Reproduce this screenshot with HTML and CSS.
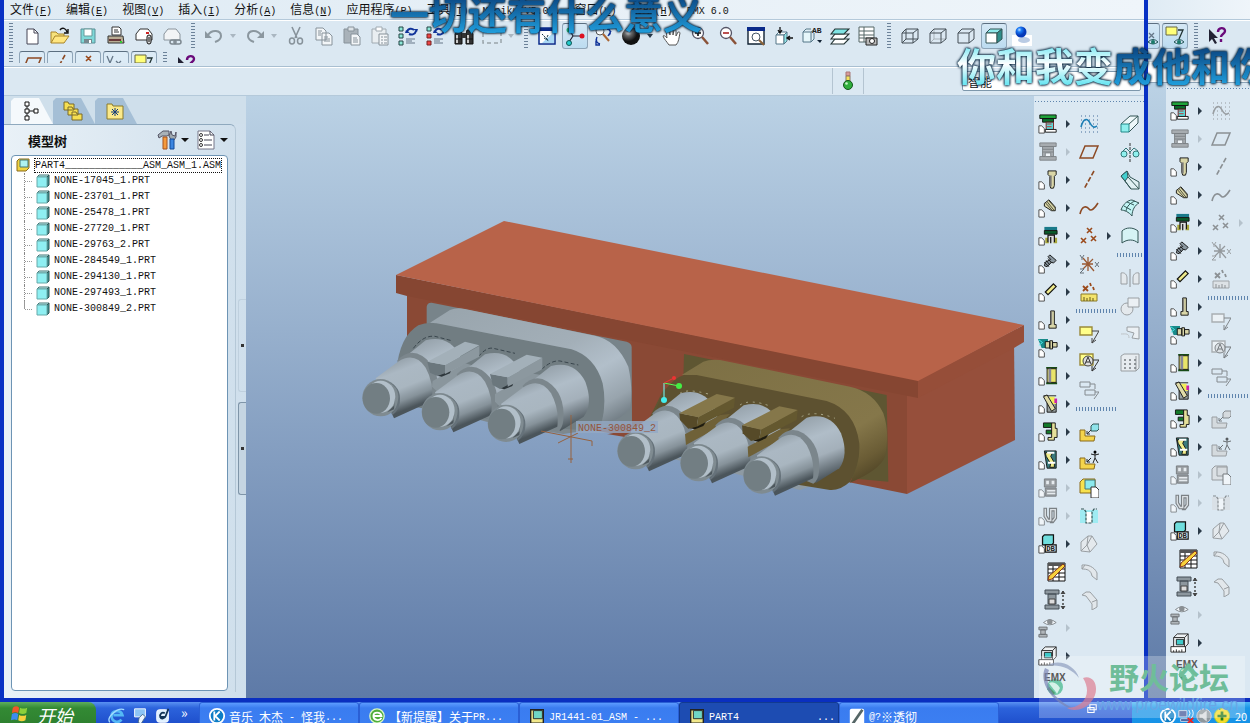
FILE: index.html
```html
<!DOCTYPE html>
<html lang="zh-CN">
<head>
    <meta charset="UTF-8">
    <meta name="viewport" content="width=device-width, initial-scale=1.0">
    <title>PART4</title>
    <link rel="stylesheet" href="styles.css">
</head>
<body>
    <!-- Icon sprite -->
    <svg class="sprite" aria-hidden="true">
        <symbol id="new" viewBox="0 0 20 20"><path d="M5 3h7l4 4v11H5z" fill="#fff" stroke="#445"/><path d="M12 3v4h4" fill="none" stroke="#445"/></symbol>
        <symbol id="open" viewBox="0 0 20 20"><path d="M1 17V6h5l2 2h6v3" fill="#f6e27c" stroke="#a8842a"/><path d="M1 17l4-7h14l-5 7z" fill="#ffe680" stroke="#a8842a"/><path d="M10 4c2-3 6-2 7 2M18 3v4h-4" fill="none" stroke="#111" stroke-width="1.4"/></symbol>
        <symbol id="save" viewBox="0 0 20 20"><path d="M3 3h14v14H3z" fill="#7fd8d8" stroke="#5a8f96"/><path d="M6 3h8v7H6z" fill="#fff" stroke="#699"/><path d="M6 13h8v4H6z" fill="#78898f"/><path d="M11 14h2v3h-2z" fill="#fff"/></symbol>
        <symbol id="print" viewBox="0 0 20 20"><path d="M6 9V1h7l2 2v6z" fill="#fff" stroke="#333"/><path d="M8 4h4M8 6h5" stroke="#333"/><path d="M2 10h15l1 7H2z" fill="#b9ad94" stroke="#333"/><path d="M3 14h12" stroke="#6a3a3a" stroke-width="2"/><path d="M14 16h2" stroke="#3c3" stroke-width="2"/></symbol>
        <symbol id="mail" viewBox="0 0 20 20"><path d="M2 8l4-5h8l4 5v6H2z" fill="#fff" stroke="#333"/><path d="M12 7h3" stroke="#c22" stroke-width="2"/><rect x="13" y="9" width="4" height="9" rx="2" fill="#ddd" stroke="#111"/><path d="M15 11v5" stroke="#111"/></symbol>
        <symbol id="maillink" viewBox="0 0 20 20"><path d="M2 8l4-5h8l4 5v6H2z" fill="#f2f4f6" stroke="#8a949c"/><rect x="8" y="14" width="6" height="4" rx="2" fill="none" stroke="#7d8890" stroke-width="1.5"/><rect x="12" y="14" width="7" height="4" rx="2" fill="none" stroke="#7d8890" stroke-width="1.5"/></symbol>
        <symbol id="undo" viewBox="0 0 20 20"><path d="M4 9c4-6 13-5 13 1 0 3-3 5-6 6" fill="none" stroke="#8b979f" stroke-width="2"/><path d="M1 5v7h7z" fill="#8b979f"/></symbol>
        <symbol id="redo" viewBox="0 0 20 20"><path d="M16 9c-4-6-13-5-13 1 0 3 3 5 6 6" fill="none" stroke="#8b979f" stroke-width="2"/><path d="M19 5v7h-7z" fill="#8b979f"/></symbol>
        <symbol id="cut" viewBox="0 0 20 20"><path d="M6 1l5 11M14 1L9 12" stroke="#87929a" stroke-width="1.6"/><ellipse cx="6" cy="15" rx="2.5" ry="3" fill="none" stroke="#87929a" stroke-width="1.5"/><ellipse cx="14" cy="15" rx="2.5" ry="3" fill="none" stroke="#87929a" stroke-width="1.5"/></symbol>
        <symbol id="copy" viewBox="0 0 20 20"><g fill="#f3f6f8" stroke="#87929a"><path d="M2 2h7l3 3v9H2zM8 7h7l3 3v9H8z"/><path d="M4 5h4M4 7h3M4 9h3M10 11h4M10 13h6M10 15h6"/></g></symbol>
        <symbol id="paste" viewBox="0 0 20 20"><path d="M2 3h14v14H2z" fill="#a9b2b9" stroke="#87929a"/><path d="M6 1h6v4H6z" fill="#dde3e7" stroke="#87929a"/><path d="M9 8h6l3 3v8H9z" fill="#f3f6f8" stroke="#87929a"/><path d="M11 12h4M11 14h5M11 16h5" stroke="#87929a"/></symbol>
        <symbol id="pastespecial" viewBox="0 0 20 20"><path d="M2 3h14v14H2z" fill="#e9eef1" stroke="#a0aab1"/><path d="M6 1h6v4H6z" fill="#fff" stroke="#a0aab1"/><path d="M9 8h9v11H9z" fill="#f3f6f8" stroke="#87929a"/><path d="M11 11h2M11 14h2M11 17h2M14 11h3M14 14h3M14 17h3" stroke="#87929a"/></symbol>
        <symbol id="regen" viewBox="0 0 20 20"><g fill="#8ee8d8" stroke="#244"><path d="M1 1h4v4H1zM1 8h4v4H1zM1 15h4v4H1z"/></g><path d="M9 6c1-4 5-4 7-2M18 5c-1 4-5 4-7 3" fill="none" stroke="#139" stroke-width="2"/><path d="M8 4l4 3H7zM19 6l-4-3h5z" fill="#139"/><path d="M8 13h9M8 15h6M8 17h9" stroke="#678"/></symbol>
        <symbol id="regenman" viewBox="0 0 20 20"><path d="M1 1h4v4H1z" fill="#8ee8d8" stroke="#244"/><path d="M1 8h4v4H1zM1 15h4v4H1z" fill="#e44" stroke="#722"/><path d="M9 6c1-4 5-4 7-2M18 5c-1 4-5 4-7 3" fill="none" stroke="#139" stroke-width="2"/><path d="M8 4l4 3H7z" fill="#139"/><path d="M8 13h9M8 15h6M8 17h9" stroke="#678"/></symbol>
        <symbol id="find" viewBox="0 0 20 20"><path d="M1 18V8l2-4h4l1 4v10zM12 18V8l1-4h4l2 4v10z" fill="#333" stroke="#111"/><path d="M8 7h4v5H8z" fill="#333"/><path d="M3 9v8M14 9v8" stroke="#ccc" stroke-width="2"/><path d="M1 13h7M12 13h7" stroke="#111"/></symbol>
        <symbol id="selbox" viewBox="0 0 20 20"><path d="M1 3h18v14H1z" fill="none" stroke="#9aa4ab" stroke-width="1.5" stroke-dasharray="4 3"/></symbol>
        <symbol id="repaint" viewBox="0 0 20 20"><path d="M2 2h16v16H2z" fill="#fff" stroke="#0a2a8a" stroke-width="1.5"/><path d="M2 2h16v3H2z" fill="#0a2a8a"/><path d="M17 6v11H5z" fill="#a9d8f5"/><path d="M5 8l6 6M7 12l5 3M11 9l-2 5" stroke="#134" stroke-dasharray="2 1"/></symbol>
        <symbol id="spin" viewBox="0 0 20 20"><path d="M4 3l4 7h9M8 10l-4 6" fill="none" stroke="#223" stroke-width="1.2"/><circle cx="4" cy="4" r="2.5" fill="#2b7"/><circle cx="17" cy="10" r="2.5" fill="#d12"/><circle cx="4" cy="17" r="2.5" fill="#2cc" stroke="#155"/></symbol>
        <symbol id="orient" viewBox="0 0 20 20"><circle cx="7" cy="5" r="4" fill="#fff" stroke="#555"/><path d="M10 8l6 7" stroke="#a63" stroke-width="2"/><path d="M4 11c-2 4 0 6 3 7M14 3c4 0 4 5 2 6M3 15v4h4M18 5l-3 5" fill="none" stroke="#139" stroke-width="1.4"/></symbol>
        <symbol id="sphere" viewBox="0 0 20 20"><circle cx="10" cy="10" r="9" fill="url(#ballDark)"/></symbol>
        <symbol id="hand" viewBox="0 0 20 20"><path d="M7 19c-2-3-5-6-6-9 1-1 2 0 4 2L4 4c1-1 2-1 3 0l1 5V3c1-1 2-1 3 0v6l1-5c1-1 2 0 2 1v5l2-4c1 0 2 0 2 1-1 4-1 9-4 12z" fill="#fff" stroke="#555"/></symbol>
        <symbol id="zoomin" viewBox="0 0 20 20"><circle cx="8" cy="7" r="5.5" fill="#fff" stroke="#556" stroke-width="1.3"/><path d="M8 4v6M5 7h6" stroke="#111" stroke-width="1.6"/><path d="M12 11l6 7" stroke="#8a5238" stroke-width="2.5"/></symbol>
        <symbol id="zoomout" viewBox="0 0 20 20"><circle cx="8" cy="7" r="5.5" fill="#fff" stroke="#556" stroke-width="1.3"/><path d="M5 7h6" stroke="#a22" stroke-width="1.6"/><path d="M12 11l6 7" stroke="#8a5238" stroke-width="2.5"/></symbol>
        <symbol id="refit" viewBox="0 0 20 20"><path d="M2 2h16v16H2z" fill="#fff" stroke="#123" stroke-width="1.4"/><path d="M1 1h18v4H1z" fill="#0a2a8a"/><circle cx="10" cy="11" r="4" fill="#fff" stroke="#456"/><path d="M13 14l5 5" stroke="#8a6238" stroke-width="2"/></symbol>
        <symbol id="reorient" viewBox="0 0 20 20"><path d="M2 9l3-3h8l-3 3z" fill="#fff" stroke="#578"/><path d="M2 9h8v9H2z" fill="#fff" stroke="#578"/><path d="M10 9l3-3v9l-3 3z" fill="#8fe5e5" stroke="#578"/><path d="M6 1v6M4 4l2 3 2-3M19 12h-6M16 10l-3 2 3 2" fill="none" stroke="#111" stroke-width="1.3"/></symbol>
        <symbol id="views" viewBox="0 0 20 20"><path d="M1 6l3-3h5M1 6h8v10H1zM9 6l3-2M12 7v6l-3 3" fill="#e6f6fa" stroke="#578"/><path d="M15 14h5l-2 3z" fill="#123"/><text x="10" y="7" class="glyph">AB</text></symbol>
        <symbol id="layers" viewBox="0 0 20 20"><g stroke="#233" stroke-width="1.2"><path d="M1 18l4-5h14l-5 5z" fill="#fff"/><path d="M1 13l4-5h14l-5 5z" fill="#fff"/><path d="M1 8l4-5h14l-5 5z" fill="#7fe3e3"/></g></symbol>
        <symbol id="viewmgr" viewBox="0 0 20 20"><path d="M1 1h15v15H1z" fill="#fff" stroke="#566"/><path d="M1 5h15M1 9h15M1 12h15M6 1v15" stroke="#566"/><path d="M8 12h11v7H8z" fill="#b9b9b9" stroke="#222"/><circle cx="14" cy="15" r="2.5" fill="#fff" stroke="#222"/></symbol>
        <symbol id="wire" viewBox="0 0 20 20"><path d="M2 7h11v10H2zM6 3h12v10H6zM2 7l4-4M13 7l5-4M13 17l5-4M2 17l4-4" fill="none" stroke="#444f57"/></symbol>
        <symbol id="hiddenline" viewBox="0 0 20 20"><path d="M6 3v10h12M2 17l4-4" fill="none" stroke="#a9b3ba"/><path d="M2 7h11v10H2zM2 7l4-4h12v10l-5 4M13 7l5-4" fill="none" stroke="#444f57"/></symbol>
        <symbol id="nohidden" viewBox="0 0 20 20"><path d="M2 7h11v10H2zM2 7l4-4h12v10l-5 4M13 7l5-4" fill="none" stroke="#444f57"/></symbol>
        <symbol id="shaded" viewBox="0 0 20 20"><path d="M2 7l4-4h12l-5 4z" fill="#8fe8ea" stroke="#355"/><path d="M2 7h11v10H2z" fill="#fff" stroke="#355"/><path d="M13 7l5-4v10l-5 4z" fill="#2f8e8a" stroke="#355"/></symbol>
        <symbol id="ball" viewBox="0 0 20 20"><path d="M0 9h20v11H0z" fill="#fff"/><ellipse cx="12" cy="14" rx="6" ry="3" fill="#b9cbe4"/><circle cx="9" cy="6" r="5.5" fill="url(#ballBlue)"/></symbol>
        <symbol id="help" viewBox="0 0 20 20"><path d="M2 3v13l3-3 3 5 2-1-3-5h4z" fill="#223"/><path d="M11 6c0-5 7-5 7-1 0 3-4 3-4 6M14 13v3" fill="none" stroke="#6a0a7a" stroke-width="2.4"/></symbol>
        <symbol id="light" viewBox="0 0 20 20"><path d="M8 1h4v4H8z" fill="#d89a9a" stroke="#a77"/><path d="M8 5h4v5H8z" fill="#f5e35a" stroke="#876"/><circle cx="10" cy="14" r="4.5" fill="#2fae3c" stroke="#15541c"/><circle cx="8.5" cy="12.5" r="1.3" fill="#c9f5c9"/></symbol>
        <symbol id="eyecsys" viewBox="0 0 20 20"><path d="M1 2l3 7M7 2L4 9v4M10 7l5 5M15 7l-5 5" stroke="#678" stroke-width="1.3" fill="none"/><path d="M9 16q5-5 10 0-5 4-10 0z" fill="#cde" stroke="#255"/><circle cx="14" cy="16" r="2" fill="#1a7a6a"/></symbol>
        <symbol id="eyenote" viewBox="0 0 20 20"><path d="M1 1h11v8H1z" fill="#ffff7a" stroke="#664"/><path d="M13 4h5l-4 9" fill="none" stroke="#233" stroke-width="1.3"/><path d="M9 16q5-5 10 0-5 4-10 0z" fill="#cde" stroke="#255"/><circle cx="14" cy="16" r="2" fill="#1a7a6a"/></symbol>

        <symbol id="plane" viewBox="0 0 20 20"><path d="M6 4h13l-5 12H1z" fill="none" stroke="#8d4a24" stroke-width="1.5"/></symbol>
        <symbol id="axis" viewBox="0 0 20 20"><path d="M15 1L5 19" stroke="#8d4a24" stroke-width="1.6" stroke-dasharray="5 2"/></symbol>
        <symbol id="curve" viewBox="0 0 20 20"><path d="M1 16C3 7 8 8 10 11s6-1 9-6" fill="none" stroke="#8d4a24" stroke-width="1.6"/></symbol>
        <symbol id="points" viewBox="0 0 20 20"><path d="M8 2l5 5M13 2L8 7M2 12l5 5M7 12l-5 5M12 10l5 5M17 10l-5 5" stroke="#9b4a1c" stroke-width="1.6"/></symbol>
        <symbol id="csys" viewBox="0 0 20 20"><path d="M3 10h11M9 3v14M4 4l11 13M14 5L4 15" stroke="#9b5a34" stroke-width="1.3"/><path d="M1 1l2 3 2-3M3 4v2M1 15h4l-4 4h4M16 8l4 5M20 8l-4 5" fill="none" stroke="#667079"/></symbol>
        <symbol id="analysis" viewBox="0 0 20 20"><path d="M4 4l5 5M9 4L4 9M11 1l1 3M14 5l1 3" stroke="#9b4a1c" stroke-width="1.8"/><path d="M2 12h16v7H2z" fill="#f3e46c" stroke="#8a7a2a"/><path d="M5 19v-4M8 19v-3M11 19v-4M14 19v-3" stroke="#665a1a"/></symbol>
        <symbol id="sketch" viewBox="0 0 20 20"><path d="M2 2h17M2 6h17M2 10h17M2 14h17M2 18h17" stroke="#456c9a" stroke-dasharray="1 3"/><path d="M2 13C4 5 8 3 11 9s5 4 7 3" fill="none" stroke="#1d7fb5" stroke-width="1.6"/></symbol>
        <symbol id="note" viewBox="0 0 20 20"><path d="M1 3h12v8H1z" fill="#ffff8a" stroke="#9a8a3a" stroke-width="1.4"/><path d="M13 7h7l-7 12M13 14v5l4-3" fill="none" stroke="#444"/></symbol>
        <symbol id="noteA" viewBox="0 0 20 20"><path d="M1 2h13v11H1z" fill="#ffff8a" stroke="#9a8a3a" stroke-width="1.4"/><circle cx="9" cy="9" r="5" fill="#ddd" stroke="#444"/><path d="M6 12l3-7 3 7M7 10h4M14 8h6l-7 11M13 14v5l4-3" fill="none" stroke="#333"/></symbol>
        <symbol id="notegroup" viewBox="0 0 20 20"><path d="M1 2h10v5H1zM6 10h10v5H6zM11 4h5v5M16 12h4l-5 7" fill="none" stroke="#444f57"/></symbol>
        <symbol id="assemble" viewBox="0 0 20 20"><path d="M1 8h5v6h10l-1 5H1z" fill="#f4d44c" stroke="#8a6a1a"/><path d="M12 4l2-2h6v5l-2 2h-6z" fill="#8fe3ea" stroke="#355"/><path d="M12 8l-4 4M8 9v3h3" fill="none" stroke="#333"/></symbol>
        <symbol id="manikin" viewBox="0 0 20 20"><path d="M1 8h5v6h10l-1 5H1z" fill="#f4d44c" stroke="#8a6a1a"/><circle cx="16" cy="2" r="1.5"/><path d="M16 3v5l-2 5M16 8l3 5M12 4l4 1 4-1M12 8l-4 4M8 9v3h3" fill="none" stroke="#222"/></symbol>
        <symbol id="create" viewBox="0 0 20 20"><path d="M1 4l3-3h12v11l-3 3H1z" fill="#f7e14d" stroke="#8a6a1a"/><path d="M6 2h10v9H6z" fill="#8be9ee" stroke="#477"/><path d="M12 9h5l3 3v8h-8z" fill="#fff" stroke="#333"/></symbol>
        <symbol id="hole" viewBox="0 0 20 20"><path d="M1 4h18v13H1z" fill="#86ecf2" opacity=".7"/><path d="M7 6h6v11H7z" fill="#fff"/><path d="M2 3h3l2 3v11h6V6l2-3h3" fill="none" stroke="#355" stroke-width="1.2" stroke-dasharray="3 1"/></symbol>
        <symbol id="draft" viewBox="0 0 20 20"><path d="M2 17V8l7-6h4l5 8-7 8z" fill="#e8eaec" stroke="#6a6f73"/><path d="M9 2l-1 9-6 6M8 11l3 7M13 2L8 11" fill="none" stroke="#6a6f73"/></symbol>
        <symbol id="round" viewBox="0 0 20 20"><path d="M3 3c9-1 14 5 15 8v7l-5-4C12 8 8 7 3 7z" fill="#e4e7ea" stroke="#6a6f73"/><path d="M3 7l3-4" stroke="#6a6f73"/></symbol>
        <symbol id="chamfer" viewBox="0 0 20 20"><path d="M3 5l4-3h4l7 8v7l-5 3v-6L7 6z" fill="#e4e7ea" stroke="#6a6f73"/><path d="M13 12l5-2" stroke="#6a6f73"/></symbol>
        <symbol id="extrude" viewBox="0 0 20 20"><path d="M1 10l9-8h8v7l-9 9" fill="#eef8fa" stroke="#355"/><path d="M9 10l9-8" stroke="#355"/><path d="M1 10h8v8H1z" fill="#8ff0ee" stroke="#288"/></symbol>
        <symbol id="revolve" viewBox="0 0 20 20"><path d="M10 1v19" stroke="#333" stroke-dasharray="3 1"/><circle cx="4" cy="12" r="3" fill="#8ff0ee" stroke="#377"/><circle cx="16" cy="12" r="3" fill="#8ff0ee" stroke="#377"/><path d="M3 9l3-3 4 4 4-4 4 3" fill="none" stroke="#377"/></symbol>
        <symbol id="sweep" viewBox="0 0 20 20"><path d="M1 6l6-5 3 6 9 5v7h-8z" fill="#dfeff2" stroke="#355"/><path d="M1 6l6-5 1 6-3 4z" fill="#43cfcf" stroke="#355"/><path d="M8 7l11 12M5 11l6 8" fill="none" stroke="#355"/></symbol>
        <symbol id="boundary" viewBox="0 0 20 20"><path d="M1 12C3 6 8 2 12 2l7 3c-4 2-7 7-7 13-3-4-8-6-11-6z" fill="#c2f5f5" stroke="#355"/><path d="M7 4l7 3M4 8l7 4M6 13c1-5 4-8 9-10" fill="none" stroke="#355"/></symbol>
        <symbol id="fill" viewBox="0 0 20 20"><path d="M2 17V5c4-4 11-4 16 0v12c-4-4-11-4-16 0z" fill="#d6f3f5" stroke="#355"/></symbol>
        <symbol id="mirror" viewBox="0 0 20 20"><path d="M10 1v18" stroke="#555"/><path d="M1 5c4-1 6 2 6 5v6H1zM19 5c-4-1-6 2-6 5v6h6z" fill="#e8ecef" stroke="#6a6f73"/></symbol>
        <symbol id="merge" viewBox="0 0 20 20"><circle cx="7" cy="13" r="6" fill="#e8ecef" stroke="#6a6f73"/><path d="M8 2h11v9H8z" fill="#f4f6f7" stroke="#6a6f73"/></symbol>
        <symbol id="trim" viewBox="0 0 20 20"><path d="M7 3h12v12l-7-1 2-5-7-2z" fill="#f4f6f7" stroke="#6a6f73"/><path d="M1 10c5 0 8-1 8 4" fill="none" stroke="#aaa"/></symbol>
        <symbol id="pattern" viewBox="0 0 20 20"><path d="M1 4l3-2h15v14l-3 3H1z" fill="#eef0f2" stroke="#6a6f73"/><path d="M16 4v15" stroke="#6a6f73"/><path d="M4 8h12M4 12h12M4 16h12" stroke="#333" stroke-width="1.5" stroke-dasharray="2 3"/></symbol>

        <symbol id="page" viewBox="0 0 8 10"><path d="M1 1h3l3 3v5H1z" fill="#fff" stroke="#444"/></symbol>
        <symbol id="moldbase" viewBox="0 0 22 22"><path d="M2 1h18v4H2z" fill="#1fa33a" stroke="#111"/><path d="M5 5h12v4H5z" fill="#0b6b2b" stroke="#111"/><path d="M9 9h8v8H9z" fill="#58e0e0" stroke="#711"/><path d="M10 11h5M10 14h5" stroke="#c22"/><path d="M8 17h12v3H8z" fill="#fff" stroke="#111"/><use href="#page" x="0" y="12" width="8" height="10"/></symbol>
        <symbol id="moldbase2" viewBox="0 0 22 22"><path d="M2 1h18v4H2zM5 5h12v11H5zM2 16h18v4H2z" fill="#7d878e" stroke="#333f46"/><path d="M5 8h12M5 11h12" stroke="#333f46"/><path d="M8 12h6v4H8z" fill="#fff" stroke="#333f46"/></symbol>
        <symbol id="screw" viewBox="0 0 22 22"><path d="M11 1h9v4l-2 2v10l-1 3h-3l-1-3V7l-2-2z" fill="#d9d6a8" stroke="#111"/><path d="M14 6v12" stroke="#777" stroke-width="2"/><use href="#page" x="0" y="12" width="8" height="10"/></symbol>
        <symbol id="pin" viewBox="0 0 22 22"><path d="M7 6l5-4 7 8v4h-4l-8-5z" fill="#d9d6a8" stroke="#111"/><path d="M10 4l8 10M12 3l7 8M8 5l8 9" stroke="#443"/><use href="#page" x="0" y="12" width="8" height="10"/></symbol>
        <symbol id="ejector" viewBox="0 0 22 22"><path d="M7 1h14v4H7z" fill="#1a7a8a"/><path d="M7 5h14v4H7z" fill="#0b5a2b" stroke="#111"/><path d="M8 13h4v6H8zM17 13h4v6h-4z" fill="#a8a63a"/><path d="M11 18v-8h7v8M14 12v7" fill="#ddd" stroke="#111" stroke-width="1.3"/><use href="#page" x="0" y="12" width="8" height="10"/></symbol>
        <symbol id="bolt" viewBox="0 0 22 22"><path d="M13 1l7 6-3 3-2-1-5 5-3-1 1-4 6-3-3-3z" fill="#8a97a0" stroke="#111"/><path d="M7 9l5 5M9 7l4 5M11 5l4 5" stroke="#111"/><use href="#page" x="0" y="12" width="8" height="10"/></symbol>
        <symbol id="rod" viewBox="0 0 22 22"><path d="M17 2l3 3-9 9-3-3z" fill="#eee98a" stroke="#111" stroke-width="1.3"/><use href="#page" x="0" y="12" width="8" height="10"/></symbol>
        <symbol id="pillar" viewBox="0 0 22 22"><path d="M14 1h4v15h2v4h-8v-4h2z" fill="#d9d6a8" stroke="#111"/><path d="M15 2v14" stroke="#777"/><use href="#page" x="0" y="12" width="8" height="10"/></symbol>
        <symbol id="nozzle" viewBox="0 0 22 22"><path d="M0 1h11v10H4z" fill="#188a8a"/><path d="M1 2l4 3-4 3" fill="none" stroke="#5ee"/><path d="M8 4h5v7H8zM13 3h3v9h-3zM16 5h5v5h-5z" fill="#d9d6a8" stroke="#111"/><use href="#page" x="0" y="12" width="8" height="10"/></symbol>
        <symbol id="bush" viewBox="0 0 22 22"><path d="M9 1h12v2H9zM9 18h12v2H9z" fill="#164a16"/><path d="M10 3h10v15H10z" fill="#e8e46a" stroke="#111"/><path d="M13 3v15" stroke="#889" stroke-width="3"/><use href="#page" x="0" y="12" width="8" height="10"/></symbol>
        <symbol id="slider" viewBox="0 0 22 22"><path d="M6 2h14M10 10h10v10H10z" stroke="#111" fill="#9aa2a2"/><path d="M12 3h6l2 8h-4z" fill="#f2ee5a"/><path d="M18 5h3v5h-3z" fill="#c2a"/><path d="M6 3l4-2 9 15-4 3z" fill="#e0dba8" stroke="#111"/><use href="#page" x="0" y="12" width="8" height="10"/></symbol>
        <symbol id="latch" viewBox="0 0 22 22"><path d="M6 1h9v5H6zM9 9h6v4H9z" fill="#137a2a" stroke="#111"/><path d="M15 1h4v6h2v10h-3v3h-7v-3h4z" fill="#e5e09a" stroke="#111"/><use href="#page" x="0" y="12" width="8" height="10"/></symbol>
        <symbol id="lifter" viewBox="0 0 22 22"><path d="M7 1h13v19H10z" fill="#3a7a7c" stroke="#111"/><path d="M8 3h8l-2 4 4 7v5h-5l1-4-5-8z" fill="#efec8a" stroke="#111"/><path d="M10 3h8M11 14h8" stroke="#fff" stroke-width="2"/><use href="#page" x="0" y="12" width="8" height="10"/></symbol>
        <symbol id="press" viewBox="0 0 22 22"><path d="M7 1h13v9H7zM8 11h12v9H8z" fill="#67727a" stroke="#333"/><path d="M9 3h3v4H9zM15 3h3v4h-3z" fill="#eee"/><path d="M10 14h9M10 17h9" stroke="#eee" stroke-width="1.5"/><use href="#page" x="0" y="12" width="8" height="10"/></symbol>
        <symbol id="clamp" viewBox="0 0 22 22"><path d="M8 2v9l3 5h3V4h5v9l-3 4h-3" fill="none" stroke="#333f46" stroke-width="4"/><path d="M8 3v8l3 5h3V4h5v9l-3 4" fill="none" stroke="#dde" stroke-width="1.5"/><use href="#page" x="0" y="12" width="8" height="10"/></symbol>
        <symbol id="db" viewBox="0 0 22 22"><path d="M5 3l2-2h10v9l-2 2H5z" fill="#6fdede" stroke="#111" stroke-width="1.4"/><path d="M8 12h12v8H8z" fill="#e8eef0" stroke="#111" stroke-width="1.3"/><text x="9" y="19" class="glyph">DB</text><use href="#page" x="0" y="12" width="8" height="10"/></symbol>
        <symbol id="bom" viewBox="0 0 22 22"><path d="M4 2h17v18H4z" fill="#fff" stroke="#111"/><path d="M4 2h17v3H4z" fill="#555"/><path d="M4 8h17M4 12h17M4 16h17M9 5v15M15 5v15" stroke="#111"/><path d="M19 3l2 2L8 18l-4 1 1-4z" fill="#f7d23c" stroke="#8a3a1a"/></symbol>
        <symbol id="basesize" viewBox="0 0 22 22"><path d="M1 1h14v4H1zM4 5h8v10H4zM1 16h14v4H1z" fill="#8d979e" stroke="#444f57"/><path d="M5 10h6v5H5z" fill="#ddd" stroke="#444"/><path d="M19 2v18" stroke="#444" stroke-width="1.5" stroke-dasharray="2 2"/><path d="M17 5l2-3 2 3M17 17l2 3 2-3" fill="#444" stroke="#444"/></symbol>
        <symbol id="eyebase" viewBox="0 0 22 22"><path d="M6 5q7-6 14 0-7 5-14 0z" fill="#fff" stroke="#444"/><circle cx="13" cy="4" r="3" fill="#555"/><path d="M1 10h9v3H1zM3 13h5v5H3zM1 18h9v3H1z" fill="#8d979e" stroke="#222"/></symbol>
        <symbol id="measure" viewBox="0 0 22 22"><path d="M4 5l4-4h12v11l-4 4H4z" fill="#eef2f4" stroke="#222"/><path d="M7 7h8v6H7z" fill="#3fc9c9" stroke="#222"/><path d="M16 5l4-4M4 5h12v11" fill="none" stroke="#222"/><path d="M1 15h16v6H1z" fill="#fff" stroke="#222"/><path d="M4 21v-2M7 21v-3M10 21v-2M13 21v-3" stroke="#222"/></symbol>
        <symbol id="emx" viewBox="0 0 22 24"><circle cx="11" cy="15" r="8" fill="#3fb48c"/><path d="M5 11c4-2 8 0 11 5l-3 6C11 18 8 16 5 11z" fill="#c9eee2"/><path d="M4 16l6 6" stroke="#177a3a" stroke-width="3"/><text x="0" y="9" class="glyph glyph-emx">EMX</text></symbol>

        <symbol id="tree" viewBox="0 0 20 20"><path d="M4 1h4v4H4zM4 8h4v4H4zM4 15h4v4H4zM13 8h4v4h-4zM6 5v3M6 12v3M8 10h5" fill="#fff" stroke="#111"/></symbol>
        <symbol id="folders" viewBox="0 0 20 20"><g fill="#f6df52" stroke="#7a6a2a"><path d="M1 3V1h4l1 2h5v6H1zM5 8V6h4l1 2h5v6H5zM9 13v-2h4l1 2h5v6H9z"/></g></symbol>
        <symbol id="favorites" viewBox="0 0 20 20"><path d="M2 5V3h5l1 2h10v13H2z" fill="#fbe98a" stroke="#8a7a2a"/><path d="M10 7v8M6 11h8M7 8l6 6M13 8l-6 6" stroke="#123a7a"/></symbol>
        <symbol id="tools" viewBox="0 0 20 20"><path d="M1 5l5-4h6v4l-2 1H8L5 6 2 8z" fill="#a9b2b9" stroke="#556"/><path d="M6 7h4v12H6z" fill="#f59a3c" stroke="#a5521c"/><path d="M14 1l1 4 3 1 1-4v5l-2 3h-3l-2-4z" fill="#9fa9b0" stroke="#556"/><path d="M13 9h4v10h-4z" fill="#3c86e0" stroke="#134a9a"/></symbol>
        <symbol id="settings" viewBox="0 0 20 20"><path d="M2 1h12l4 4v14H2z" fill="#fff" stroke="#778"/><path d="M14 1v4h4M8 5h5M8 10h8M8 15h8" fill="none" stroke="#445"/><circle cx="5" cy="5" r="1.5" fill="none" stroke="#333"/><circle cx="5" cy="10" r="1.5" fill="none" stroke="#333"/><circle cx="5" cy="15" r="1.5" fill="none" stroke="#333"/></symbol>
        <symbol id="asm" viewBox="0 0 14 14"><path d="M1 3l2-2h10v9l-3 3H1z" fill="#f0d442" stroke="#8a6a1a"/><path d="M4 2h8v7H4z" fill="#aef2f2" stroke="#477"/></symbol>
        <symbol id="part" viewBox="0 0 14 14"><path d="M1 3l2-2h10l-2 2z" fill="#c9f7f7" stroke="#477"/><path d="M11 3l2-2v10l-2 2z" fill="#349a9a" stroke="#355"/><path d="M1 3h10v10H1z" fill="#8feff2" stroke="#6aa"/></symbol>
        <symbol id="flag" viewBox="0 0 20 20"><path d="M2 3q4-3 7 0L8 9q-3-2-7 0z" fill="#f0562a"/><path d="M10 3q4 2 8 0l-1 6q-4 2-8 0z" fill="#8cd03a"/><path d="M1 10q4-2 7 0l-1 7q-3-2-7 0z" fill="#3c8cf0"/><path d="M9 11q4 2 8 0l-1 6q-4 2-8 0z" fill="#f8d03c"/></symbol>
        <symbol id="ie" viewBox="0 0 20 20"><path d="M15 14c-4 5-11 2-11-4s10-8 12-1H6" fill="none" stroke="#54b8f5" stroke-width="3"/><path d="M2 17C-2 12 10 0 18 3" fill="none" stroke="#a5dcff" stroke-width="1.5"/></symbol>
        <symbol id="desktop" viewBox="0 0 20 20"><path d="M4 2h12v9H4z" fill="#8cc4f5" stroke="#fff"/><path d="M9 12l4-4 3 3-5 8-3-2z" fill="#eef6ff" stroke="#468"/></symbol>
        <symbol id="mailer" viewBox="0 0 20 20"><rect x="3" y="3" width="13" height="14" rx="3" fill="#dff0ff" stroke="#fff"/><path d="M12 7c-3-2-6 1-5 4s5 2 6-1l3-8M6 11h6" fill="none" stroke="#135" stroke-width="2"/></symbol>
        <symbol id="kugou" viewBox="0 0 20 20"><circle cx="10" cy="10" r="8" fill="#0d7dc5" stroke="#fff" stroke-width="2"/><path d="M7 5v10M13 5l-5 5 5 5" fill="none" stroke="#fff" stroke-width="2"/></symbol>
        <symbol id="browser" viewBox="0 0 20 20"><circle cx="10" cy="10" r="8" fill="#4fae3a" stroke="#d9f5c9" stroke-width="1.5"/><path d="M15 12c-2 4-9 3-9-2s8-5 9 0H7" fill="none" stroke="#fff" stroke-width="2"/></symbol>
        <symbol id="proe" viewBox="0 0 20 20"><path d="M3 3h14v15H3z" fill="#f2e88a" stroke="#222" stroke-width="1.5"/><path d="M6 4h10v9H6z" fill="#6fd5c5" stroke="#222"/></symbol>
        <symbol id="notepad" viewBox="0 0 20 20"><rect x="2" y="2" width="16" height="18" rx="2" fill="#fff"/><path d="M16 3L5 19" stroke="#566" stroke-width="3"/></symbol>
        <symbol id="network" viewBox="0 0 20 20"><path d="M2 4h9v7H2zM4 13h10v3H4z" fill="#465a9a" stroke="#cde"/><path d="M13 3q3 4 0 8M16 2q4 5 0 10" fill="none" stroke="#fff"/><path d="M12 12l6 6M18 12l-6 6" stroke="#e22" stroke-width="2"/></symbol>
        <symbol id="volume" viewBox="0 0 20 20"><circle cx="10" cy="10" r="8" fill="#8e989e" stroke="#ccd"/><path d="M5 8h3l5-4v12l-5-4H5z" fill="#d9dde0"/></symbol>
        <symbol id="guard" viewBox="0 0 20 20"><circle cx="10" cy="10" r="8.5" fill="#f5dc2a" stroke="#9ac53a"/><path d="M10 5v10M5 10h10" stroke="#267a1c" stroke-width="3"/></symbol>
        <symbol id="restore" viewBox="0 0 20 20"><path d="M7 4h9v7H7zM4 8h9v7H4z" fill="#2a62d5" stroke="#fff" stroke-width="1.5"/></symbol>
    </svg>

    <div class="screen">
        <main class="window">
            <nav class="menubar">
                <a href="#">文件<span class="latin">(<u>F</u>)</span></a>
                <a href="#">编辑<span class="latin">(<u>E</u>)</span></a>
                <a href="#">视图<span class="latin">(<u>V</u>)</span></a>
                <a href="#">插入<span class="latin">(<u>I</u>)</span></a>
                <a href="#">分析<span class="latin">(<u>A</u>)</span></a>
                <a href="#">信息<span class="latin">(<u>N</u>)</span></a>
                <a href="#">应用程序<span class="latin">(<u>P</u>)</span></a>
                <a href="#">工具<span class="latin">(<u>T</u>)</span></a>
                <a href="#"><span class="latin">Moniku V5.0M.</span></a>
                <a href="#">窗口<span class="latin">(<u>W</u>)</span></a>
                <a href="#">帮助<span class="latin">(<u>H</u>)</span></a>
                <a href="#"><span class="latin">EMX 6.0</span></a>
            </nav>

            <div class="toolbar">
                <span class="grip"></span>
                <button class="tool" aria-label="新建"><svg><use href="#new"/></svg></button>
                <button class="tool" aria-label="打开"><svg><use href="#open"/></svg></button>
                <button class="tool" aria-label="保存"><svg><use href="#save"/></svg></button>
                <button class="tool" aria-label="打印"><svg><use href="#print"/></svg></button>
                <button class="tool" aria-label="发送"><svg><use href="#mail"/></svg></button>
                <button class="tool" aria-label="发送链接"><svg><use href="#maillink"/></svg></button>
                <span class="grip"></span>
                <button class="tool has-menu faded" aria-label="撤消"><svg><use href="#undo"/></svg></button>
                <button class="tool has-menu faded" aria-label="重做"><svg><use href="#redo"/></svg></button>
                <button class="tool" aria-label="剪切"><svg><use href="#cut"/></svg></button>
                <button class="tool" aria-label="复制"><svg><use href="#copy"/></svg></button>
                <button class="tool" aria-label="粘贴"><svg><use href="#paste"/></svg></button>
                <button class="tool" aria-label="选择性粘贴"><svg><use href="#pastespecial"/></svg></button>
                <button class="tool" aria-label="再生"><svg><use href="#regen"/></svg></button>
                <button class="tool" aria-label="再生管理器"><svg><use href="#regenman"/></svg></button>
                <button class="tool" aria-label="查找"><svg><use href="#find"/></svg></button>
                <button class="tool has-menu faded" aria-label="选取框"><svg><use href="#selbox"/></svg></button>
                <span class="grip"></span>
                <button class="tool" aria-label="重画"><svg><use href="#repaint"/></svg></button>
                <button class="tool pressed" aria-label="旋转中心"><svg><use href="#spin"/></svg></button>
                <button class="tool" aria-label="定向模式"><svg><use href="#orient"/></svg></button>
                <button class="tool has-menu" aria-label="外观库"><svg><use href="#sphere"/></svg></button>
                <button class="tool" aria-label="平移"><svg><use href="#hand"/></svg></button>
                <button class="tool" aria-label="放大"><svg><use href="#zoomin"/></svg></button>
                <button class="tool" aria-label="缩小"><svg><use href="#zoomout"/></svg></button>
                <button class="tool" aria-label="重新调整"><svg><use href="#refit"/></svg></button>
                <button class="tool" aria-label="重定向"><svg><use href="#reorient"/></svg></button>
                <button class="tool" aria-label="已命名视图"><svg><use href="#views"/></svg></button>
                <button class="tool" aria-label="层"><svg><use href="#layers"/></svg></button>
                <button class="tool" aria-label="视图管理器"><svg><use href="#viewmgr"/></svg></button>
                <span class="grip"></span>
                <button class="tool" aria-label="线框"><svg><use href="#wire"/></svg></button>
                <button class="tool" aria-label="隐藏线"><svg><use href="#hiddenline"/></svg></button>
                <button class="tool" aria-label="无隐藏线"><svg><use href="#nohidden"/></svg></button>
                <button class="tool pressed" aria-label="着色"><svg><use href="#shaded"/></svg></button>
                <button class="tool" aria-label="增强的真实感"><svg><use href="#ball"/></svg></button>
            </div>

            <div class="toolbar toolbar-cut">
                <span class="grip"></span>
                <button class="tool pressed" aria-label="基准平面"><svg><use href="#plane"/></svg></button>
                <button class="tool pressed" aria-label="基准轴"><svg><use href="#axis"/></svg></button>
                <button class="tool pressed" aria-label="基准点"><svg><use href="#points"/></svg></button>
                <button class="tool pressed" aria-label="坐标系"><svg><use href="#eyecsys"/></svg></button>
                <button class="tool pressed" aria-label="注释"><svg><use href="#eyenote"/></svg></button>
                <span class="grip"></span>
                <button class="tool" aria-label="帮助"><svg><use href="#help"/></svg></button>
            </div>

            <div class="message-bar">
                <div class="status-light"><svg><use href="#light"/></svg></div>
                <select class="filter" aria-label="选取过滤器"><option>智能</option></select>
            </div>

            <div class="workspace">
                <aside class="navigator">
                    <div class="nav-tabs">
                        <button class="nav-tab active" aria-label="模型树"><svg><use href="#tree"/></svg></button>
                        <button class="nav-tab" aria-label="文件夹浏览器"><svg><use href="#folders"/></svg></button>
                        <button class="nav-tab" aria-label="收藏夹"><svg><use href="#favorites"/></svg></button>
                    </div>
                    <div class="nav-frame">
                        <div class="nav-header">
                            <h2>模型树</h2>
                            <button class="nav-tool" aria-label="设置"><svg><use href="#tools"/></svg></button>
                            <button class="nav-tool" aria-label="显示"><svg><use href="#settings"/></svg></button>
                        </div>
                        <div class="tree">
                            <div class="tree-root"><svg><use href="#asm"/></svg><span>PART4_____________ASM_ASM_1.ASM</span></div>
                            <ul>
                                <li><svg><use href="#part"/></svg>NONE-17045_1.PRT</li>
                                <li><svg><use href="#part"/></svg>NONE-23701_1.PRT</li>
                                <li><svg><use href="#part"/></svg>NONE-25478_1.PRT</li>
                                <li><svg><use href="#part"/></svg>NONE-27720_1.PRT</li>
                                <li><svg><use href="#part"/></svg>NONE-29763_2.PRT</li>
                                <li><svg><use href="#part"/></svg>NONE-284549_1.PRT</li>
                                <li><svg><use href="#part"/></svg>NONE-294130_1.PRT</li>
                                <li><svg><use href="#part"/></svg>NONE-297493_1.PRT</li>
                                <li><svg><use href="#part"/></svg>NONE-300849_2.PRT</li>
                            </ul>
                        </div>
                    </div>
                    <div class="sash">
                        <button class="sash-handle" aria-label="折叠浏览器"></button>
                        <button class="sash-handle raised" aria-label="折叠导航器"></button>
                    </div>
                </aside>

                <section class="viewport">
                    <svg class="model" viewBox="246 96 788 602" preserveAspectRatio="xMidYMid slice" role="img" aria-label="装配模型">
                        <defs>
                            <!-- fills of the two ball icons -->
                            <radialGradient id="ballDark" cx=".35" cy=".3"><stop offset="0" stop-color="#ddd"/><stop offset=".4" stop-color="#666"/><stop offset="1" stop-color="#111"/></radialGradient>
                            <radialGradient id="ballBlue" cx=".35" cy=".3"><stop offset="0" stop-color="#bdf"/><stop offset=".4" stop-color="#1a7af5"/><stop offset="1" stop-color="#0439b8"/></radialGradient>
                            <linearGradient id="steel" gradientUnits="userSpaceOnUse" x1="60" y1="-130" x2="120" y2="22">
                                <stop offset="0" stop-color="#8c98a0"/><stop offset=".3" stop-color="#abb8c3"/><stop offset=".6" stop-color="#a9b6c0"/><stop offset=".82" stop-color="#86929a"/><stop offset="1" stop-color="#4b555b"/>
                            </linearGradient>
                            <linearGradient id="steelRear" gradientUnits="userSpaceOnUse" x1="150" y1="-180" x2="220" y2="0">
                                <stop offset="0" stop-color="#95a1aa"/><stop offset=".35" stop-color="#b0bdc8"/><stop offset=".65" stop-color="#a4b0ba"/><stop offset="1" stop-color="#4f595f"/>
                            </linearGradient>
                            <linearGradient id="flange" x1="0" y1="0" x2="1" y2="1">
                                <stop offset="0" stop-color="#98a4ac"/><stop offset=".5" stop-color="#a3afb8"/><stop offset=".68" stop-color="#b2bfca"/><stop offset=".85" stop-color="#98a4ad"/><stop offset="1" stop-color="#606b72"/>
                            </linearGradient>
                            <linearGradient id="brass" x1="0" y1="0" x2="1" y2="1">
                                <stop offset="0" stop-color="#7d7045"/><stop offset=".7" stop-color="#85774a"/><stop offset=".85" stop-color="#6a5c35"/><stop offset="1" stop-color="#3f361d"/>
                            </linearGradient>
                            <!-- one contact pin, the centre of its tip at 0,0 -->
                            <g id="contact">
                                <path d="M95-132L145-172Q215-190 248-125Q272-60 243-20L172 24Z" fill="url(#steelRear)"/>
                                <path d="M60-112Q95-150 135-125Q188-90 182-10Q180 15 165 26L100 0Z" fill="#7b868c"/>
                                <path d="M-5-58L62-108Q112-140 145-90Q170-45 164 10L50 62Z" fill="url(#steel)"/>
                                <ellipse cx="10" cy="0" rx="55" ry="56" fill="#7f8b91"/>
                                <path d="M15-54Q70-38 62 8Q58 35 42 48L46 52Q70 34 68 2Q68-42 15-54Z" fill="#66727a"/>
                                <ellipse cx="10" cy="-3" rx="44" ry="48" fill="#b2bfc9"/>
                                <path d="M30 44L50 24L54-5L50 35Z" fill="#4d575d"/>
                                <ellipse cx="-3" cy="2" rx="41" ry="46" fill="#727e83"/>
                            </g>
                        </defs>

                        <!-- housing -->
                        <path d="M407 290L907 388V494L407 392Z" fill="#8a4935"/>
                        <path d="M907 388L1014 340L1015 440L907 494Z" fill="#964f3b"/>
                        <path d="M396 275L918 380V398L407 296L396 293Z" fill="#864632"/>
                        <path d="M918 380L1024 325V342L1014 348L918 398Z" fill="#964e39"/>
                        <path d="M504 221L1024 325L918 381L396 275Z" fill="#b86349"/>

                        <!-- left insert -->
                        <g transform="translate(350 210) scale(.333333)">
                            <path d="M205 590L190 560L420 560L700 640L846 640L640 672L410 635L370 625Z" fill="#7d888e"/>
                            <path d="M230 290Q232 277 245 278L830 395Q845 400 845 412L846 645L700 640L230 400Z" fill="#78848a"/>
                            <path d="M140 480Q148 380 205 346Q230 336 260 340L665 418Q740 445 760 530Q768 590 755 640L690 660L560 650L190 590Z" fill="#717d82"/>
                            <path d="M240 338L300 300Q320 291 345 297L735 377Q800 390 835 470Q850 540 840 595Q810 635 755 640Q770 580 758 520Q735 440 665 418L260 340Z" fill="url(#flange)"/>
                            <g fill="none" stroke="#39454c" stroke-width="3" stroke-dasharray="12 7">
                                <path d="M190 415Q220 375 255 379L305 392"/><path d="M385 440Q410 410 430 415L495 430"/><path d="M575 478Q605 450 630 453L685 465"/>
                            </g>
                            <use href="#contact" x="82" y="563"/>
                            <path d="M248 513L345 460L375 468L365 490L262 545L246 530Z" fill="#8a969d"/>
                            <path d="M262 497L305 475L300 490L275 500Z" fill="#2e373c"/>
                            <path d="M232 455L285 465V490L262 498L240 488Z" fill="#6b777d"/>
                            <path d="M285 465L388 408V440L285 492Z" fill="#8c989f"/>
                            <path d="M232 455L345 395L388 406L285 465Z" fill="#a3b0b9"/>
                            <use href="#contact" x="260" y="605"/>
                            <path d="M435 552L540 490L575 495L560 520L450 590L435 575Z" fill="#8a969d"/>
                            <path d="M450 535L492 513L487 528L463 538Z" fill="#2e373c"/>
                            <path d="M420 492L473 502V525L450 537L428 525Z" fill="#6b777d"/>
                            <path d="M473 502L577 443V478L473 530Z" fill="#8c989f"/>
                            <path d="M420 492L530 434L577 443L473 502Z" fill="#a3b0b9"/>
                            <use href="#contact" x="458" y="640"/>
                        </g>

                        <!-- right insert -->
                        <g transform="translate(600 300) scale(.333333)">
                            <path d="M210 470L420 500L680 540L600 570L400 520L210 475Z" fill="#8e9aa3"/>
                            <path d="M252 162L860 285L865 545L700 530L150 350L190 270L250 235Z" fill="#5e5632"/>
                            <path d="M160 350Q200 225 270 222L290 225L680 300Q770 330 778 430Q780 490 750 545Q720 572 690 570L580 552L450 500Z" fill="#5d5130"/>
                            <path d="M245 225L310 185Q330 177 360 180L750 260Q820 275 850 340Q870 400 855 470Q840 510 750 548Q782 490 778 430Q765 330 680 303L290 225Z" fill="url(#brass)"/>
                            <g fill="none" stroke="#a9a88a" stroke-width="3" stroke-dasharray="6 14">
                                <path d="M240 280Q260 265 325 282"/><path d="M420 315Q450 295 515 320"/><path d="M605 350Q640 330 705 355"/>
                            </g>
                            <use href="#contact" x="97" y="452"/>
                            <path d="M255 403L360 345L390 342L350 385L258 435Z" fill="#6f6138"/>
                            <path d="M270 385L320 362L310 378L285 388Z" fill="#1f1c10"/>
                            <path d="M238 340L295 350L290 380L265 386L240 360Z" fill="#564a28"/>
                            <path d="M295 350L405 293L402 323L290 380Z" fill="#64582f"/>
                            <path d="M238 340L350 282L405 293L295 352Z" fill="#85774a"/>
                            <use href="#contact" x="286" y="488"/>
                            <path d="M443 440L540 388L570 385L540 420L445 472Z" fill="#6f6138"/>
                            <path d="M460 422L508 399L498 415L475 425Z" fill="#1f1c10"/>
                            <path d="M426 376L483 387L478 417L453 423L428 400Z" fill="#564a28"/>
                            <path d="M483 387L593 330L590 360L478 417Z" fill="#64582f"/>
                            <path d="M426 376L538 319L593 330L483 389Z" fill="#85774a"/>
                            <use href="#contact" x="475" y="525"/>
                        </g>

                        <!-- spin centre and coordinate system -->
                        <path d="M664 383V400" stroke="#7ff"/><path d="M664 383L679 386" stroke="#5f5"/><path d="M664 383L674 378" stroke="#e33"/>
                        <circle cx="664" cy="400" r="3" fill="#4ee"/><circle cx="679" cy="386" r="3" fill="#4e4"/><circle cx="674" cy="378" r="2" fill="#e33"/>
                        <path d="M571 415V463M541 431L592 441V446M558 443L578 433M568 459H573" fill="none" stroke="#96623f"/>
                        <path d="M607 434L622 434L625 437Z" fill="#8a4935"/>
                        <rect x="576" y="421" width="82" height="12" fill="#94a9c4" opacity=".8"/>
                        <text x="578" y="431" class="model-label">NONE-300849_2</text>
                    </svg>
                </section>

                <div class="palette">
                    <div class="palette-col wide">
                        <button class="tool has-menu" aria-label="模架"><svg><use href="#moldbase"/></svg></button>
                        <button class="tool has-menu" disabled aria-label="模架元件"><svg><use href="#moldbase2"/></svg></button>
                        <button class="tool has-menu" aria-label="螺钉"><svg><use href="#screw"/></svg></button>
                        <button class="tool has-menu" aria-label="定位销"><svg><use href="#pin"/></svg></button>
                        <button class="tool has-menu" aria-label="顶杆板"><svg><use href="#ejector"/></svg></button>
                        <button class="tool has-menu" aria-label="螺栓"><svg><use href="#bolt"/></svg></button>
                        <button class="tool has-menu" aria-label="顶杆"><svg><use href="#rod"/></svg></button>
                        <button class="tool has-menu" aria-label="支柱"><svg><use href="#pillar"/></svg></button>
                        <button class="tool has-menu" aria-label="冷却"><svg><use href="#nozzle"/></svg></button>
                        <button class="tool has-menu" aria-label="导套"><svg><use href="#bush"/></svg></button>
                        <button class="tool has-menu" aria-label="滑块"><svg><use href="#slider"/></svg></button>
                        <button class="tool has-menu" aria-label="锁扣"><svg><use href="#latch"/></svg></button>
                        <button class="tool has-menu" aria-label="斜顶"><svg><use href="#lifter"/></svg></button>
                        <button class="tool has-menu" disabled aria-label="热流道"><svg><use href="#press"/></svg></button>
                        <button class="tool has-menu" disabled aria-label="夹具"><svg><use href="#clamp"/></svg></button>
                        <button class="tool has-menu" aria-label="元件库"><svg><use href="#db"/></svg></button>
                        <button class="tool shift" aria-label="材料清单"><svg><use href="#bom"/></svg></button>
                        <button class="tool shift" aria-label="模架尺寸"><svg><use href="#basesize"/></svg></button>
                        <button class="tool has-menu" disabled aria-label="显示模架"><svg><use href="#eyebase"/></svg></button>
                        <button class="tool has-menu" aria-label="测量"><svg><use href="#measure"/></svg></button>
                        <button class="tool shift" aria-label="EMX"><svg><use href="#emx"/></svg></button>
                    </div>
                    <div class="palette-col wide">
                        <button class="tool" aria-label="草绘"><svg><use href="#sketch"/></svg></button>
                        <button class="tool" aria-label="平面"><svg><use href="#plane"/></svg></button>
                        <button class="tool" aria-label="轴"><svg><use href="#axis"/></svg></button>
                        <button class="tool" aria-label="曲线"><svg><use href="#curve"/></svg></button>
                        <button class="tool has-menu" aria-label="点"><svg><use href="#points"/></svg></button>
                        <button class="tool" aria-label="坐标系"><svg><use href="#csys"/></svg></button>
                        <button class="tool" aria-label="分析"><svg><use href="#analysis"/></svg></button>
                        <span class="divider"></span>
                        <button class="tool" aria-label="注释"><svg><use href="#note"/></svg></button>
                        <button class="tool" aria-label="注释特征"><svg><use href="#noteA"/></svg></button>
                        <button class="tool" disabled aria-label="注释组"><svg><use href="#notegroup"/></svg></button>
                        <span class="divider"></span>
                        <button class="tool" aria-label="装配"><svg><use href="#assemble"/></svg></button>
                        <button class="tool" aria-label="人体模型"><svg><use href="#manikin"/></svg></button>
                        <button class="tool" aria-label="创建元件"><svg><use href="#create"/></svg></button>
                        <button class="tool" aria-label="孔"><svg><use href="#hole"/></svg></button>
                        <button class="tool" disabled aria-label="拔模"><svg><use href="#draft"/></svg></button>
                        <button class="tool" disabled aria-label="倒圆角"><svg><use href="#round"/></svg></button>
                        <button class="tool" disabled aria-label="倒角"><svg><use href="#chamfer"/></svg></button>
                    </div>
                    <div class="palette-col">
                        <button class="tool" aria-label="拉伸"><svg><use href="#extrude"/></svg></button>
                        <button class="tool" aria-label="旋转"><svg><use href="#revolve"/></svg></button>
                        <button class="tool" aria-label="扫描"><svg><use href="#sweep"/></svg></button>
                        <button class="tool" aria-label="边界混合"><svg><use href="#boundary"/></svg></button>
                        <button class="tool" aria-label="填充"><svg><use href="#fill"/></svg></button>
                        <span class="divider"></span>
                        <button class="tool" disabled aria-label="镜像"><svg><use href="#mirror"/></svg></button>
                        <button class="tool" disabled aria-label="合并"><svg><use href="#merge"/></svg></button>
                        <button class="tool" disabled aria-label="修剪"><svg><use href="#trim"/></svg></button>
                        <button class="tool" disabled aria-label="阵列"><svg><use href="#pattern"/></svg></button>
                    </div>
                </div>
            </div>
        </main>

        <!-- Second session, showing from behind -->
        <section class="window-behind">
            <div class="menubar"></div>
            <div class="toolbar">
                <button class="tool pressed half" aria-label="显示坐标系"><svg><use href="#eyecsys"/></svg></button>
                <button class="tool pressed" aria-label="显示注释"><svg><use href="#eyenote"/></svg></button>
                <span class="grip"></span>
                <button class="tool" aria-label="上下文帮助"><svg><use href="#help"/></svg></button>
            </div>
            <div class="behind-field"></div>
            <div class="workspace">
                <div class="viewport"></div>
                <div class="palette">
                    <div class="palette-col wide">
                        <button class="tool has-menu" aria-label="模架"><svg><use href="#moldbase"/></svg></button>
                        <button class="tool has-menu" disabled aria-label="模架元件"><svg><use href="#moldbase2"/></svg></button>
                        <button class="tool has-menu" aria-label="螺钉"><svg><use href="#screw"/></svg></button>
                        <button class="tool has-menu" aria-label="定位销"><svg><use href="#pin"/></svg></button>
                        <button class="tool has-menu" aria-label="顶杆板"><svg><use href="#ejector"/></svg></button>
                        <button class="tool has-menu" aria-label="螺栓"><svg><use href="#bolt"/></svg></button>
                        <button class="tool has-menu" aria-label="顶杆"><svg><use href="#rod"/></svg></button>
                        <button class="tool has-menu" aria-label="支柱"><svg><use href="#pillar"/></svg></button>
                        <button class="tool has-menu" aria-label="冷却"><svg><use href="#nozzle"/></svg></button>
                        <button class="tool has-menu" aria-label="导套"><svg><use href="#bush"/></svg></button>
                        <button class="tool has-menu" aria-label="滑块"><svg><use href="#slider"/></svg></button>
                        <button class="tool has-menu" aria-label="锁扣"><svg><use href="#latch"/></svg></button>
                        <button class="tool has-menu" aria-label="斜顶"><svg><use href="#lifter"/></svg></button>
                        <button class="tool has-menu" disabled aria-label="热流道"><svg><use href="#press"/></svg></button>
                        <button class="tool has-menu" disabled aria-label="夹具"><svg><use href="#clamp"/></svg></button>
                        <button class="tool has-menu" aria-label="元件库"><svg><use href="#db"/></svg></button>
                        <button class="tool shift" aria-label="材料清单"><svg><use href="#bom"/></svg></button>
                        <button class="tool shift" aria-label="模架尺寸"><svg><use href="#basesize"/></svg></button>
                        <button class="tool has-menu" disabled aria-label="显示模架"><svg><use href="#eyebase"/></svg></button>
                        <button class="tool has-menu" aria-label="测量"><svg><use href="#measure"/></svg></button>
                        <button class="tool shift" aria-label="EMX"><svg><use href="#emx"/></svg></button>
                    </div>
                    <div class="palette-col wide">
                        <button class="tool" disabled aria-label="草绘"><svg><use href="#sketch"/></svg></button>
                        <button class="tool" disabled aria-label="平面"><svg><use href="#plane"/></svg></button>
                        <button class="tool" disabled aria-label="轴"><svg><use href="#axis"/></svg></button>
                        <button class="tool" disabled aria-label="曲线"><svg><use href="#curve"/></svg></button>
                        <button class="tool has-menu" disabled aria-label="点"><svg><use href="#points"/></svg></button>
                        <button class="tool" disabled aria-label="坐标系"><svg><use href="#csys"/></svg></button>
                        <button class="tool" disabled aria-label="分析"><svg><use href="#analysis"/></svg></button>
                        <span class="divider"></span>
                        <button class="tool" disabled aria-label="注释"><svg><use href="#note"/></svg></button>
                        <button class="tool" disabled aria-label="注释特征"><svg><use href="#noteA"/></svg></button>
                        <button class="tool" disabled aria-label="注释组"><svg><use href="#notegroup"/></svg></button>
                        <span class="divider"></span>
                        <button class="tool" disabled aria-label="装配"><svg><use href="#assemble"/></svg></button>
                        <button class="tool" disabled aria-label="人体模型"><svg><use href="#manikin"/></svg></button>
                        <button class="tool" disabled aria-label="创建元件"><svg><use href="#create"/></svg></button>
                        <button class="tool" disabled aria-label="孔"><svg><use href="#hole"/></svg></button>
                        <button class="tool" disabled aria-label="拔模"><svg><use href="#draft"/></svg></button>
                        <button class="tool" disabled aria-label="倒圆角"><svg><use href="#round"/></svg></button>
                        <button class="tool" disabled aria-label="倒角"><svg><use href="#chamfer"/></svg></button>
                    </div>
                </div>
            </div>
        </section>
    </div>

    <footer class="taskbar">
        <button class="start"><svg><use href="#flag"/></svg>开始</button>
        <div class="quick">
            <a href="#" aria-label="Internet Explorer"><svg><use href="#ie"/></svg></a>
            <a href="#" aria-label="显示桌面"><svg><use href="#desktop"/></svg></a>
            <a href="#" aria-label="邮件"><svg><use href="#mailer"/></svg></a>
            <span>»</span>
        </div>
        <button class="task"><svg><use href="#kugou"/></svg>音乐<span class="latin"> </span>木杰<span class="latin"> - </span>怪我<span class="latin">...</span></button>
        <button class="task"><svg><use href="#browser"/></svg>【新提醒】关于<span class="latin">PR...</span></button>
        <button class="task"><svg><use href="#proe"/></svg><span class="latin">JR1441-01_ASM - ...</span></button>
        <button class="task active"><svg><use href="#proe"/></svg><span class="latin">PART4             ...</span></button>
        <button class="task"><svg><use href="#notepad"/></svg><span class="latin">@?</span>※透彻</button>
        <button class="restore" aria-label="还原语言栏"><svg><use href="#restore"/></svg></button>
        <div class="tray">
            <svg><use href="#kugou"/></svg>
            <svg><use href="#network"/></svg>
            <svg><use href="#volume"/></svg>
            <svg><use href="#guard"/></svg>
            <span>20</span>
        </div>
    </footer>

    <!-- Desktop lyrics -->
    <div class="lyrics">
        <p class="lyric lyric-first"><span class="sung">一切还有什么意义</span></p>
        <p class="lyric lyric-second"><span class="coming">你和我变</span><span class="sung">成他和你</span></p>
    </div>

    <div class="watermark">
        <svg viewBox="0 0 62 60" aria-hidden="true">
            <path d="M6 12C-2 30 20 52 38 54C16 44 4 30 10 14" fill="#7b86b5"/>
            <path d="M8 10C18 2 36 8 40 22C32 12 20 8 8 10" fill="#8f9fc0"/>
            <path d="M44 22C56 18 62 34 52 46C46 54 34 56 28 52C44 52 54 38 44 22" fill="#dd7f92"/>
        </svg>
        <div>
            <strong>野火论坛</strong>
            <span>www.proewildfire.cn</span>
        </div>
    </div>
</body>
</html>
```
FILE: styles.css
```css
* {
    margin: 0;
    padding: 0;
    box-sizing: border-box;
}

body {
    height: 100vh;
    display: flex;
    flex-direction: column;
    overflow: hidden;
    position: relative;
    background-color: #dbe8f2;
    color: #111;
    font-family: "Noto Sans CJK SC", sans-serif;
    font-size: 12px;
}

button {
    border: none;
    background: none;
    font: inherit;
    color: inherit;
}

a {
    color: inherit;
    text-decoration: none;
}

.sprite {
    display: none;
}

.latin {
    font-family: "Liberation Mono", monospace;
    font-size: 10px;
    white-space: pre;
}

.glyph {
    font-family: "Liberation Mono", monospace;
    font-size: 8px;
    font-weight: bold;
    fill: #222;
}

.glyph-emx {
    font-family: "Liberation Sans", sans-serif;
    font-size: 10px;
}

/* Windows */
.screen {
    flex: 1;
    min-height: 0;
    display: flex;
    border-bottom: 4px solid #0a2fc0;
}

.window {
    flex: 1;
    min-width: 0;
    display: flex;
    flex-direction: column;
    border: solid #0831c4;
    border-width: 0 4px;
}

.window-behind {
    width: 102px;
    display: flex;
    flex-direction: column;
    overflow: hidden;
}

.menubar {
    height: 20px;
    flex-shrink: 0;
    display: flex;
    align-items: center;
    gap: 14px;
    padding: 0 6px 2px;
    white-space: nowrap;
    background: linear-gradient(90deg, #dfebf4, #eff5fa);
    border-bottom: 1px solid #b4c9da;
}

.toolbar {
    height: 31px;
    flex-shrink: 0;
    display: flex;
    align-items: center;
    border-top: 1px solid #fff;
}

.toolbar-cut {
    height: 12px;
    align-items: flex-start;
    overflow: hidden;
    border-top: none;
}

.grip {
    width: 4px;
    height: 28px;
    margin: 0 5px;
    flex-shrink: 0;
    background-image: radial-gradient(circle, #6c8299 1px, transparent 1px);
    background-size: 2px 3px;
}

.tool {
    width: 28px;
    height: 26px;
    flex-shrink: 0;
    display: flex;
    align-items: center;
    justify-content: center;
}

.tool svg {
    width: 20px;
    height: 20px;
    flex-shrink: 0;
}

.tool.pressed {
    width: 26px;
    margin: 0 1px;
    border: 1px solid #8fa5b8;
    border-top-color: #5c6f80;
    border-radius: 3px;
    background: linear-gradient(#d5e8f5, #bcdcf0);
}

.toolbar-cut .pressed {
    background: #dcebf6;
}

.tool.has-menu {
    width: 41px;
    justify-content: flex-start;
    padding-left: 4px;
}

.tool.has-menu::after {
    content: "";
    margin-left: 6px;
    border: solid transparent;
    border-width: 4px 3px 0;
    border-top-color: #2b3a48;
}

.tool.faded::after {
    border-top-color: #aab7c1;
}

.tool.half {
    width: 12px;
    margin-left: 0;
    overflow: hidden;
    border-left: none;
    border-radius: 0 3px 3px 0;
    justify-content: flex-end;
}

.tool:disabled svg {
    filter: grayscale(1);
    opacity: 0.6;
}

.message-bar {
    height: 33px;
    flex-shrink: 0;
    display: flex;
    align-items: center;
    justify-content: flex-end;
    gap: 98px;
    padding: 4px 3px 0 0;
    border-bottom: 1px solid #b4c9da;
    background: linear-gradient(#dbe8f2 3px, #a9bfd1 3px, #a9bfd1 4px, #fff 4px, #fff 5px, #dbe8f2 5px);
}

.status-light {
    width: 32px;
    height: 26px;
    display: flex;
    align-items: center;
    justify-content: center;
    border: solid #b4c4d1;
    border-width: 0 1px;
}

.status-light svg {
    width: 20px;
    height: 20px;
}

.filter {
    width: 179px;
    height: 20px;
    padding-left: 5px;
    appearance: none;
    border: 1px solid #7d97ab;
    border-radius: 2px;
    background-color: #fff;
    color: #111;
    font: inherit;
}

.workspace {
    flex: 1;
    min-height: 0;
    display: flex;
}

/* Navigator */
.navigator {
    width: 242px;
    display: grid;
    grid-template-columns: 1fr 10px;
    grid-template-rows: 28px 1fr;
    padding-bottom: 6px;
    background: linear-gradient(90deg, #e9f1f7, #cfdfec);
}

.nav-tabs {
    grid-column: 1 / 3;
    display: flex;
    padding: 2px 0 0 7px;
    background-color: #cfdfeb;
}

.nav-tab {
    width: 42px;
    padding-right: 2px;
    display: flex;
    align-items: center;
    justify-content: center;
    background-color: #a5bfd6;
    clip-path: polygon(3px 0, 28px 0, 42px 100%, 0 100%, 0 3px);
}

.nav-tab.active {
    background-color: #f5f9fc;
}

.nav-tab svg {
    width: 20px;
    height: 20px;
}

.nav-frame {
    min-height: 0;
    display: flex;
    flex-direction: column;
    padding: 0 7px 1px;
    border-top: 1px solid #8fa9be;
    border-right: 1px solid #b5c8d7;
    border-radius: 0 6px 0 0;
}

.nav-header {
    height: 30px;
    display: flex;
    align-items: center;
    gap: 7px;
}

.nav-header h2 {
    flex: 1;
    padding-left: 17px;
    font-size: 13px;
}

.nav-tool {
    display: flex;
    align-items: center;
    gap: 4px;
}

.nav-tool svg {
    width: 20px;
    height: 20px;
}

.nav-tool::after {
    content: "";
    border: solid transparent;
    border-width: 4px 4px 0;
    border-top-color: #111;
}

.tree {
    flex: 1;
    padding: 1px 4px;
    border: 1px solid #6d94b4;
    border-radius: 4px;
    background-color: #fff;
    font-family: "Liberation Mono", monospace;
    font-size: 10px;
    line-height: 18px;
    white-space: nowrap;
}

.tree svg {
    width: 14px;
    height: 14px;
    flex-shrink: 0;
}

.tree-root {
    display: flex;
    align-items: center;
    gap: 5px;
    height: 16px;
}

.tree-root span {
    line-height: 13px;
    outline: 1px dotted #111;
}

.tree ul {
    list-style: none;
    margin-left: 8px;
}

.tree li {
    display: flex;
    align-items: center;
    gap: 4px;
    height: 16px;
    border-left: 1px dotted #888;
}

.tree li::before {
    content: "";
    width: 7px;
    border-top: 1px dotted #999;
}

.tree li:last-child {
    border-image: linear-gradient(#999 50%, transparent 50%) 1;
}

.sash {
    display: flex;
    flex-direction: column;
    gap: 10px;
    padding: 175px 0 0 2px;
}

.sash-handle {
    height: 93px;
    border: 1px solid #bfd0de;
    border-right: none;
    border-radius: 3px 0 0 3px;
    display: flex;
    align-items: center;
    justify-content: center;
}

.sash-handle::after {
    content: "";
    width: 3px;
    height: 3px;
    background-color: #333;
}

.sash-handle.raised {
    border-color: #7f95a8;
    background-color: #c5d5e2;
}

/* Graphics area */
.viewport {
    flex: 1;
    min-width: 0;
    background: linear-gradient(#bbd2e5, #5e7aa7);
}

.model {
    display: block;
    width: 100%;
    height: 100%;
}

.model-label {
    font-family: "Liberation Mono", monospace;
    font-size: 10px;
    fill: #94563c;
}

/* Feature toolbars on the right */
.palette {
    display: flex;
    align-items: flex-start;
    padding-top: 14px;
    background:
        radial-gradient(circle, #5f84ad 1px, transparent 1px) 0 4px / 3px 3px repeat-x,
        #dbe8f2;
}

.palette-col {
    width: 28px;
    display: flex;
    flex-direction: column;
}

.palette-col.wide {
    width: 41px;
}

.palette .tool {
    height: 28px;
}

.palette .tool.has-menu::after {
    margin-left: 8px;
    border-width: 4px 0 4px 4px;
    border-color: transparent transparent transparent #2b3a48;
}

.palette .tool.has-menu:disabled::after {
    border-left-color: #b5c2cc;
}

.palette .tool.shift {
    width: 41px;
}

.palette .tool.shift svg {
    width: 22px;
    height: 24px;
}

.divider {
    height: 4px;
    margin: 3px 0 7px;
    background-image: radial-gradient(circle, #5f84ad 1px, transparent 1px);
    background-size: 3px 2px;
}

.window-behind .palette {
    width: 84px;
    overflow: hidden;
}

.behind-field {
    height: 32px;
    flex-shrink: 0;
    background: linear-gradient(#dbe8f2 10px, #8fa5b8 10px, #fff 11px, #fff 31px, #8fa5b8 31px);
}

/* Taskbar */
.taskbar {
    height: 21px;
    display: flex;
    align-items: flex-start;
    overflow: hidden;
    color: #fff;
    background: linear-gradient(#5a92f2, #2c63dc 6px, #1f50cd);
}

.taskbar svg {
    width: 18px;
    height: 18px;
    flex-shrink: 0;
}

.start {
    width: 96px;
    height: 30px;
    display: flex;
    align-items: flex-start;
    gap: 8px;
    padding: 3px 0 0 11px;
    border-radius: 0 8px 8px 0;
    background: linear-gradient(#5fae5c, #338a34 6px, #2c7c2d);
    font-size: 18px;
    font-style: italic;
    line-height: 20px;
}

.quick {
    width: 103px;
    display: flex;
    gap: 5px;
    padding: 5px 0 0 12px;
}

.quick span {
    padding-left: 4px;
    font-size: 14px;
    line-height: 10px;
}

.task {
    flex: 0 1 160px;
    min-width: 0;
    height: 30px;
    display: flex;
    align-items: flex-start;
    padding: 4px 8px 0;
    overflow: hidden;
    white-space: nowrap;
    line-height: 20px;
    border: 1px solid #2a5fd5;
    border-radius: 3px;
    background: linear-gradient(#5c9bff, #3a7cf0 5px, #3c80f3);
}

.task svg {
    margin-right: 3px;
}

.task .latin {
    line-height: 22px;
}

.task.active {
    background: #1d4cb2;
    border-color: #123a90;
}

.restore {
    margin-left: auto;
    padding-right: 33px;
}

.restore svg {
    width: 14px;
    height: 14px;
}

.tray {
    width: 118px;
    height: 30px;
    display: flex;
    align-items: flex-start;
    padding: 5px 0 0 27px;
    background: linear-gradient(#4fb9f5, #1a96e8 6px, #1490e6);
}

.tray span {
    padding-left: 4px;
    font-size: 11px;
    line-height: 18px;
}

/* Overlays */
.lyrics {
    position: absolute;
    inset: 0;
    overflow: hidden;
    pointer-events: none;
}

.lyric {
    position: absolute;
    white-space: nowrap;
    font-size: 39px;
    font-weight: bold;
    line-height: 44px;
    filter: drop-shadow(0 0 1px #06243d) drop-shadow(0 0 1px #06243d);
}

.lyric-first {
    left: 390px;
    top: -10px;
}

.lyric-second {
    left: 957px;
    top: 42px;
}

.lyric span {
    color: transparent;
    background-clip: text;
    -webkit-background-clip: text;
}

.lyric .sung {
    background-image: linear-gradient(#0c4a86 25%, #1f9ad8 85%);
}

.lyric .coming {
    background-image: linear-gradient(#6fe6f2 15%, #fff 50%, #6fe6f2 85%);
}

.watermark {
    position: absolute;
    right: 5px;
    bottom: 5px;
    width: 206px;
    height: 62px;
    display: flex;
    background-color: rgba(255, 255, 255, 0.25);
    pointer-events: none;
}

.watermark svg {
    width: 62px;
    height: 60px;
    flex-shrink: 0;
    opacity: 0.7;
}

.watermark div {
    margin-left: -4px;
}

.watermark strong {
    display: block;
    padding-left: 12px;
    font-size: 30px;
    line-height: 40px;
    color: #6fbd99;
}

.watermark span {
    display: block;
    font-family: "Liberation Sans", sans-serif;
    font-size: 16px;
    line-height: 18px;
    color: #69a6e6;
}
```
